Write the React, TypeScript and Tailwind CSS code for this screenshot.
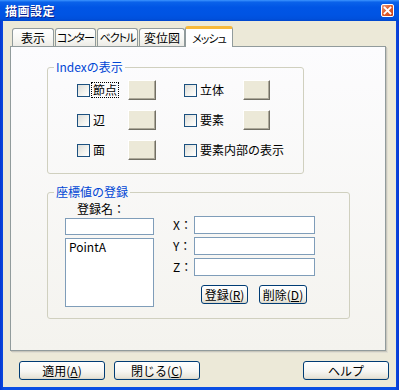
import { ReactNode } from 'react'
import clsx from 'clsx'

const FONT = "font-['Noto_Sans_CJK_JP','Noto_Sans',sans-serif]"

function XpCheck() {
  return (
    <span className="block w-[13px] h-[13px] shrink-0 border border-[#1c5180] bg-[linear-gradient(135deg,#dcdcd7_0%,#f4f4f0_60%,#ffffff_100%)]" />
  )
}

function ColorButton({ w = 28 }: { w?: number }) {
  return (
    <span
      className={clsx(
        'block h-[20px] shrink-0 bg-[#ece9d8] border-t border-l border-t-white border-l-white border-r border-b border-r-[#716f64] border-b-[#716f64] shadow-[inset_-1px_-1px_0_#aca899]',
        w === 28 ? 'w-[28px]' : 'w-[27px]'
      )}
    />
  )
}

function XpButton({ children, className }: { children: ReactNode; className?: string }) {
  return (
    <button
      className={clsx(
        'flex items-center justify-center rounded-[3px] border border-[#003c74] bg-[linear-gradient(180deg,#ffffff_0%,#f6f6f2_55%,#e8e5da_90%,#d8d3c6_100%)] text-[12px] leading-none text-black whitespace-nowrap',
        className
      )}
    >
      {children}
    </button>
  )
}

function Tab({ label, selected, kana }: { label: string; selected?: boolean; kana?: boolean }) {
  const text = clsx(
    'whitespace-nowrap [font-feature-settings:"palt"]',
    kana ? 'text-[11px] tracking-[-1px]' : 'text-[12px]'
  )
  if (selected) {
    return (
      <div className="relative z-10 -mb-px h-[21px] w-[48px] flex items-center justify-center rounded-t-[3px] border-x border-[#919b9c] bg-white border-t-[3px] border-t-[#f7b93a]">
        <span className={text}>{label}</span>
      </div>
    )
  }
  return (
    <div className="h-[18px] flex items-center justify-center rounded-t-[3px] border border-b-0 border-[#919b9c] bg-[linear-gradient(180deg,#ffffff_0%,#f7f7f3_60%,#ecebe6_100%)]">
      <span className={text}>{label}</span>
    </div>
  )
}

function IndexRow({ a, b, bBtn = true, focus }: { a: string; b: string; bBtn?: boolean; focus?: boolean }) {
  return (
    <div className="flex items-center h-[20px]">
      <div className="flex items-center w-[107px]">
        <XpCheck />
        <span className="w-[35px] ml-[3px] flex items-center">
          <span className={clsx('leading-[14px] px-px -ml-px', focus && 'outline outline-1 outline-dotted outline-black')}>{a}</span>
        </span>
        <ColorButton />
      </div>
      <div className="flex items-center">
        <XpCheck />
        <span className={clsx('ml-[3px] leading-[14px]', bBtn && 'w-[43px]')}>{b}</span>
        {bBtn && <ColorButton w={27} />}
      </div>
    </div>
  )
}

function Field({ label }: { label: string }) {
  return (
    <div className="flex items-center h-[18px]">
      <span className="w-[21px]">{label}</span>
      <span className="block w-[121px] h-[18px] border border-[#7f9db9] bg-white" />
    </div>
  )
}

export default function App() {
  return (
    <div className={clsx('w-[399px] h-[390px] flex flex-col bg-[linear-gradient(90deg,#0838d0_0%,#0a4ee4_1%,#0a4ee4_99%,#0838d0_100%)] text-black', FONT)}>
      {/* Title bar */}
      <div className="h-[21px] shrink-0 flex items-center justify-between pl-[5px] pr-[5px] bg-[linear-gradient(180deg,#3d95ff_0%,#0a62ea_10%,#0055e5_35%,#0054e3_70%,#0050dc_90%,#0046cc_100%)]">
        <span className="text-[12px] font-bold text-white leading-none tracking-[0.5px] [text-shadow:1px_1px_0_#0a1e8c]">描画設定</span>
        <span className="w-[13px] h-[13px] rounded-[2px] border border-white bg-[linear-gradient(135deg,#eb9b80_0%,#e0602f_45%,#c8401a_100%)] flex items-center justify-center">
          <svg width="9" height="9" viewBox="0 0 9 9">
            <path d="M1.5 1.5 L7.5 7.5 M7.5 1.5 L1.5 7.5" stroke="white" strokeWidth="1.8" strokeLinecap="square" />
          </svg>
        </span>
      </div>

      {/* Body */}
      <div className="flex-1 mx-[3px] mb-[3px] bg-[#ece9d8] flex flex-col text-[12px]">
        {/* Tabs */}
        <div className="h-[25px] flex items-end pl-[9px]">
          <div className="w-[42px]"><Tab label="表示" /></div>
          <div className="w-[41px] ml-px"><Tab label="コンター" kana /></div>
          <div className="w-[41px] ml-px"><Tab label="ベクトル" kana /></div>
          <div className="w-[46px] ml-px"><Tab label="変位図" /></div>
          <Tab label="メッシュ" selected kana />
        </div>

        {/* Panel */}
        <div className="ml-[7px] w-[376px] h-[305px] shrink-0 border border-[#919b9c] bg-[linear-gradient(180deg,#fcfcfe_0%,#f4f3ee_100%)] shadow-[1px_1px_0_#c8c6bb,2px_2px_0_#e0ded3]">
          <fieldset className="ml-[36px] mt-[13px] w-[257px] h-[114px] rounded-[3px] border border-[#d0d0bf]">
            <legend className="ml-[6px] px-[2px] text-[#0046d5] leading-[14px]">Indexの表示</legend>
            <div className="pl-[29px] pt-[6px] flex flex-col gap-[10px]">
              <IndexRow a="節点" b="立体" focus />
              <IndexRow a="辺" b="要素" />
              <IndexRow a="面" b="要素内部の表示" bBtn={false} />
            </div>
          </fieldset>

          <fieldset className="ml-[36px] mt-[11px] w-[303px] h-[134px] rounded-[3px] border border-[#d0d0bf]">
            <legend className="ml-[6px] px-[2px] text-[#0046d5] leading-[14px]">座標値の登録</legend>
            <div className="flex items-start pl-[17px]">
              <div className="w-[89px] flex flex-col">
                <span className="ml-[12px] mt-[3px] leading-[14px]">登録名：</span>
                <span className="block mt-[2px] h-[17px] border border-[#7f9db9] bg-white" />
                <div className="mt-[3px] h-[69px] border border-[#7f9db9] bg-white pl-[3px] pt-px leading-[14px]">PointA</div>
              </div>
              <div className="ml-[19px] pt-[17px] flex flex-col">
                <div className="flex flex-col gap-[3px]">
                  <Field label="X：" />
                  <Field label="Y：" />
                  <Field label="Z：" />
                </div>
                <div className="mt-[9px] ml-[28px] flex gap-[11px]">
                  <XpButton className="w-[47px] h-[19px]">登録(<span className="underline">R</span>)</XpButton>
                  <XpButton className="w-[48px] h-[19px]">削除(<span className="underline">D</span>)</XpButton>
                </div>
              </div>
            </div>
          </fieldset>
        </div>

        {/* Bottom buttons */}
        <div className="mt-[10px] flex pl-[16px] pr-[7px]">
          <XpButton className="w-[86px] h-[19px]">適用(<span className="underline">A</span>)</XpButton>
          <XpButton className="ml-[9px] w-[86px] h-[19px]">閉じる(<span className="underline">C</span>)</XpButton>
          <XpButton className="ml-auto w-[86px] h-[19px]">ヘルプ</XpButton>
        </div>
      </div>
    </div>
  )
}
